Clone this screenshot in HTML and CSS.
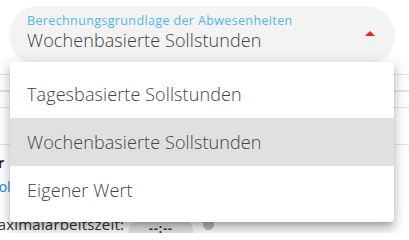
FILE: index.html
```html
<!DOCTYPE html>
<html lang="de">
<head>
<meta charset="utf-8">
<link rel="stylesheet" href="styles.css">
</head>
<body>
<div class="page">
  <div class="field">
    <div class="field-text">
      <div class="field-label">Berechnungsgrundlage der Abwesenheiten</div>
      <div class="field-value">Wochenbasierte Sollstunden</div>
    </div>
    <svg class="arrow" width="10" height="5" viewBox="0 0 10 5"><path d="M0 5 L5 0 L10 5 Z" fill="#e8261c"/></svg>
  </div>
  <div class="behind">
    <div class="rule r1"></div>
    <div class="rule r2"></div>
    <div class="rule r3"></div>
    <div class="rule r4"></div>
    <div class="line bold">Vor</div>
    <div class="line blue">Soll</div>
    <div class="line max">
      <span class="max-label">Maximalarbeitszeit:</span>
      <span class="time">--:--</span>
      <span class="dot"></span>
    </div>
  </div>
  <ul class="menu">
    <li class="item">Tagesbasierte Sollstunden</li>
    <li class="item active">Wochenbasierte Sollstunden</li>
    <li class="item">Eigener Wert</li>
  </ul>
</div>
</body>
</html>
```
FILE: styles.css
```css
* { box-sizing: border-box; }
html, body { margin: 0; padding: 0; background: #fff; }
body { width: 409px; height: 233px; overflow: hidden; font-family: "Open Sans", "DejaVu Sans", sans-serif; }
.page { position: relative; padding-top: 6px; }
.field {
  margin: 0 15px 0 10px;
  height: 56px;
  border-radius: 28px;
  background: #f3f3f3;
  box-shadow: 0 2px 3px rgba(0,0,0,0.08);
  display: flex;
  align-items: center;
  padding: 0 19px 0 17px;
}
.field-text { flex: 1; display: flex; flex-direction: column; }
.field-label { font-size: 12.5px; line-height: 14px; color: #4fb8ee; letter-spacing: 0.37px; margin-top: -4px; margin-bottom: 1px; }
.field-value { font-size: 18px; line-height: 22px; color: #3e3e3e; font-weight: 300; letter-spacing: 0.1px; }
.arrow { display: block; margin-top: -1px; }
.behind { padding-top: 12px; }
.rule { height: 1px; background: #e2e2e2; }
.r1 { margin-bottom: 15px; }
.r2 { height: 2px; margin-bottom: 15px; }
.r3 { margin-bottom: 36px; }
.r4 { margin-bottom: 6px; }
.line { font-size: 14px; line-height: 24px; margin-left: -20px; color: #222; }
.bold { font-weight: 700; }
.blue { color: #1e88e5; margin-left: -9px; }
.max { display: flex; align-items: center; margin-left: -16px; margin-top: 5px; }
.max-label { color: #333; width: 145px; font-size: 15px; letter-spacing: 0.2px; }
.time { width: 64px; height: 26px; border-radius: 13px; background: #e6e6e6; font-size: 12px; text-align: center; line-height: 22px; color: #333; letter-spacing: 1px; font-weight: 700; margin-top: 14px; }
.dot { width: 11px; height: 11px; border-radius: 50%; background: #bdbdbd; margin-left: 10px; }
.menu {
  position: absolute;
  top: 62px;
  left: 10px;
  width: 384px;
  margin: 0;
  padding: 8px 0;
  list-style: none;
  background: #fff;
  border-radius: 0 0 4px 4px;
  box-shadow: 0 5px 5px -3px rgba(0,0,0,.2), 0 8px 10px 1px rgba(0,0,0,.14), 0 3px 14px 2px rgba(0,0,0,.12);
}
.item { height: 48px; line-height: 48px; padding-left: 17px; font-size: 18px; color: #444; font-weight: 300; letter-spacing: 0.1px; }
.item.active { background: #e0e0e0; }
```
